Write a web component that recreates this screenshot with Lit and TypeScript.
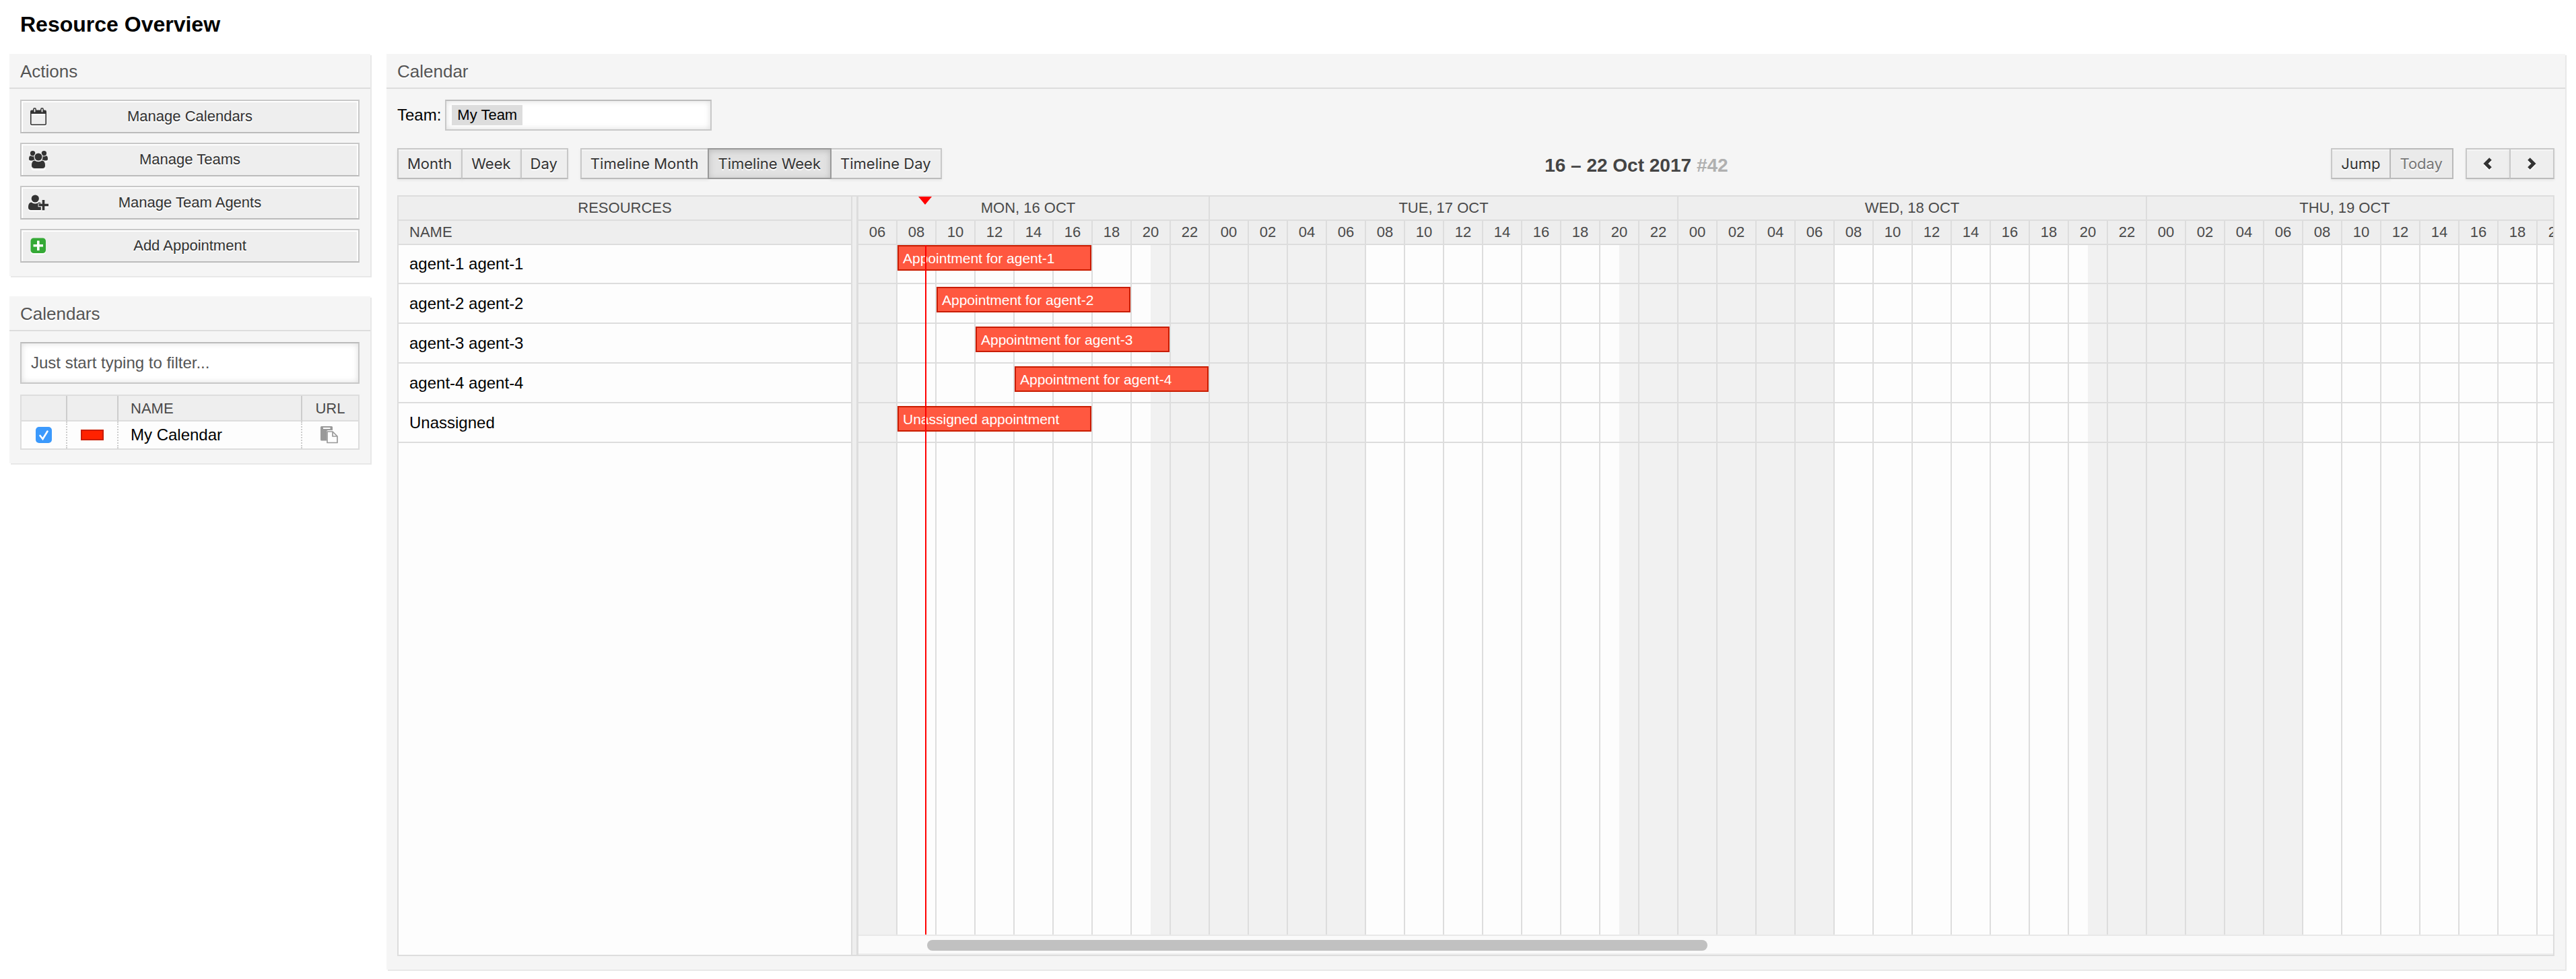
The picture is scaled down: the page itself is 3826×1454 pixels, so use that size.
import { LitElement, html, css, svg } from "lit";
import { customElement } from "lit/decorators.js";
import { classMap } from "lit/directives/class-map.js";
import { styleMap } from "lit/directives/style-map.js";

const calendarIcon = svg`<svg class="icon" viewBox="0 0 24 26" width="24" height="26" aria-hidden="true">
  <rect x="0.800" y="4.300" width="22.400" height="20.900" rx="1.500" fill="none" stroke="#333" stroke-width="1.600"/>
  <path fill="#333" d="M1 4h22v5H1z"/>
  <g fill="#eee" stroke="#333" stroke-width="1.500"><rect x="4.800" y="0.800" width="3.400" height="6.400" rx="1.700"/><rect x="15.800" y="0.800" width="3.400" height="6.400" rx="1.700"/></g></svg>`;
const teamIcon = svg`<svg class="icon" viewBox="0 0 28 28" width="28" height="28" aria-hidden="true">
  <g fill="#333"><circle cx="5.600" cy="4.700" r="3.700"/><circle cx="22.400" cy="4.700" r="3.700"/>
  <path d="M2.200 8.300c2 1.500 5 1.500 7 0v7.200H2.500Q0 15.500 0 13c0-2.500.6-4.700 2.200-4.700zM25.800 8.300c-2 1.500-5 1.500-7 0v7.200h6.700q2.500 0 2.500-2.500c0-2.500-.6-4.700-2.200-4.700z"/></g>
  <g fill="#333" stroke="#eee" stroke-width="1.200">
  <path d="M8.500 14.800c3.300 2.200 7.700 2.200 11 0 3.700.3 5.100 4 5.100 7.900 0 3-1.700 4.900-4.600 4.900H8c-2.900 0-4.600-1.900-4.600-4.900 0-3.900 1.400-7.600 5.100-7.900z"/>
  <circle cx="14" cy="10" r="6.100"/></g></svg>`;
const userPlusIcon = svg`<svg class="icon" viewBox="0 0 30 24" width="30" height="24" aria-hidden="true">
  <g fill="#333"><circle cx="10.300" cy="6" r="5.600"/>
  <path d="M4.700 11.500c3.200 2.600 7.900 2.600 11.100 0 1.600.1 2.600.7 3.400 1.700H14.600v5h4.200v4.500c-.5.200-1 .3-1.600.3H4c-2.500 0-4-1.300-4-3.800 0-4 1-7.400 4.700-7.700z"/>
  <path d="M20.700 8h3.600v5.700H30v3.600h-5.700v6h-3.600v-6h-5.200v-3.600h5.200z"/></g></svg>`;
const plusIcon = svg`<svg class="icon" viewBox="0 0 24 24" width="24" height="24" aria-hidden="true">
  <rect x="0.500" y="0.500" width="22.500" height="22.500" rx="4.500" fill="#35a936"/>
  <path fill="#fff" d="M10 4.500h3.600v5.400H19v3.700h-5.400V19H10v-5.400H4.500V9.900H10z"/></svg>`;
const pasteIcon = svg`<svg viewBox="0 0 26 26" width="26" height="26" aria-hidden="true">
  <path fill="#999" fill-rule="evenodd" d="M1.500 0H16.500q1.500 0 1.500 1.500V6h-6.500Q9 6 9 8.500V21.500H1.500Q0 21.500 0 20V1.500Q0 0 1.500 0zM4 2v2h10.500V2z"/>
  <path fill="#fdfdfd" stroke="#999" stroke-width="1.700" stroke-linejoin="round" d="M10 8h8l7 7v9.500H10z"/>
  <path fill="none" stroke="#999" stroke-width="1.700" stroke-linejoin="round" d="M18 8v7h7"/></svg>`;
const chevron = (d: string) => svg`<svg viewBox="0 0 16 20" width="16" height="20" aria-hidden="true">
  <path fill="none" stroke="#333" stroke-width="5" d=${d}/></svg>`;

interface Row { name: string; title: string; start: number; }

const FIRST_HOUR = 6;
const SLOT = 58;
const ROWS: Row[] = [
  { name: "agent-1 agent-1", title: "Appointment for agent-1", start: 8 },
  { name: "agent-2 agent-2", title: "Appointment for agent-2", start: 10 },
  { name: "agent-3 agent-3", title: "Appointment for agent-3", start: 12 },
  { name: "agent-4 agent-4", title: "Appointment for agent-4", start: 14 },
  { name: "Unassigned", title: "Unassigned appointment", start: 8 },
];
const DAYS = ["MON, 16 OCT", "TUE, 17 OCT", "WED, 18 OCT", "THU, 19 OCT"];
const HOURS = Array.from({ length: 44 }, (_, i) => (FIRST_HOUR + i * 2) % 24);
const pad = (n: number) => String(n).padStart(2, "0");

@customElement("resource-timeline")
export class ResourceTimeline extends LitElement {
  static styles = css`
    :host { display: flex; flex: 1; min-height: 0; border: 2px solid #ddd; background: #fdfdfd; color: #000; }
    .resources { flex: none; width: 672px; border-right: 2px solid #ddd; }
    .splitter { flex: none; width: 6px; background: #eee; border-right: 3px solid #ddd; }
    .timeline { flex: 1; min-width: 0; display: flex; flex-direction: column; overflow: hidden; position: relative; }
    .head { flex: none; display: flex; align-items: center; box-sizing: border-box; height: 36px; border-bottom: 2px solid #ddd;
      background: #eee; color: #4a4a4a; font-size: 22px; line-height: 26px; }
    .resources .head { padding: 0 16px; }
    .center { justify-content: center; }
    .name { display: flex; align-items: center; box-sizing: border-box; height: 59px; padding: 0 16px; border-bottom: 2px solid #ddd;
      font-size: 24px; line-height: 28px; }
    .name.first { height: 58px; }
    .day { flex: none; display: flex; justify-content: center; box-sizing: border-box; width: 696px; height: 34px; align-items: center;
      border-right: 2px solid #ddd; }
    .day.first { width: 522px; padding-right: 16px; }
    .day.last { flex: 1; width: auto; border: 0; padding-right: 16px; }
    .hour { flex: none; box-sizing: border-box; width: 58px; height: 34px; line-height: 34px; border-right: 2px solid #ddd; text-align: center; }
    .body { flex: 1; position: relative; overflow: hidden; }
    .slots { position: absolute; inset: 0; display: flex; }
    .slot { flex: none; box-sizing: border-box; width: 58px; border-right: 2px solid #ddd; }
    .off { background: #f1f1f1; }
    .half { background: linear-gradient(to right, transparent 50%, #f1f1f1 50%); }
    .lane { position: relative; box-sizing: border-box; height: 59px; padding-top: 4px; border-bottom: 2px solid #ddd; }
    .lane.first { height: 58px; padding-top: 0; }
    .event { display: block; box-sizing: border-box; width: 288px; height: 38px; padding: 0 6px; border: 2px solid #c91c00;
      background: #ff5840; color: #fff; font-size: 21px; line-height: 36px; text-decoration: none; white-space: nowrap; overflow: hidden; }
    .now { position: absolute; top: 0; bottom: 0; width: 2px; background: #f00; }
    .marker { position: absolute; top: 0; border: 10px solid transparent; border-top: 12px solid #f00; border-bottom: 0; }
    .scrollbar { flex: none; box-sizing: border-box; height: 30px; padding: 6px 0 0 102px; border-top: 2px solid #e8e8e8;
      border-bottom: 2px solid #ededed; background: #fafafa; }
    .thumb { width: 48%; height: 16px; border-radius: 8px; background: #c1c1c1; }
  `;

  private slotClass(h: number) {
    return classMap({ slot: true, off: h < 8 || h === 22, half: h === 20 });
  }

  render() {
    return html`
      <div class="resources">
        <div class="head center">RESOURCES</div>
        <div class="head">NAME</div>
        ${ROWS.map((r, i) => html`<div class=${classMap({ name: true, first: i === 0 })}>${r.name}</div>`)}
      </div>
      <div class="splitter"></div>
      <div class="timeline">
        <div class="head">
          ${DAYS.map((d, i) => html`<div class=${classMap({ day: true, first: i === 0, last: i === DAYS.length - 1 })}>${d}</div>`)}
        </div>
        <div class="head">${HOURS.map((h) => html`<div class="hour">${pad(h)}</div>`)}</div>
        <div class="marker" style=${styleMap({ left: "89px" })}></div>
        <div class="body">
          <div class="slots">${HOURS.map((h) => html`<div class=${this.slotClass(h)}></div>`)}</div>
          ${ROWS.map((r, i) => html`<div class=${classMap({ lane: true, first: i === 0 })}>
            <a class="event" href="#appointment" style=${styleMap({ marginLeft: `${((r.start - FIRST_HOUR) / 2) * SLOT}px` })}>${r.title}</a>
          </div>`)}
          <div class="now" style=${styleMap({ left: "99px" })}></div>
        </div>
        <div class="scrollbar"><div class="thumb"></div></div>
      </div>`;
  }
}

@customElement("app-root")
export class AppRoot extends LitElement {
  static styles = css`
    :host { display: flex; flex-direction: column; box-sizing: border-box; min-height: 100vh; padding: 0 16px 14px 14px;
      background: #fff; color: #000; font-family: "Liberation Sans", Arial, Helvetica, sans-serif; font-size: 24px; }
    h1 { margin: 0; padding: 18px 16px 26px; font-size: 32px; line-height: 36px; font-weight: bold; }
    .columns { flex: 1; display: flex; gap: 24px; }
    aside { flex: none; width: 536px; display: flex; flex-direction: column; gap: 30px; }
    .box { background: #f5f5f5; box-shadow: 2px 2px 0 #e8e8e8; }
    .box h2 { margin: 0; padding: 11px 16px 9px; border-bottom: 2px solid #ddd; color: #555; font-size: 26px; line-height: 30px;
      font-weight: normal; text-shadow: 0 2px 0 #fff; }
    .content { padding: 16px; }
    main.box { flex: 1; min-width: 0; display: flex; flex-direction: column; }
    main .content { flex: 1; display: flex; flex-direction: column; padding-bottom: 20px; }
    button { margin: 0; box-sizing: border-box; border: 2px solid #c8c8c8; border-bottom-color: #bbb; background: #eee; color: #333;
      font-family: inherit; font-size: 22px; text-shadow: 0 2px 0 #fff; }
    .actions { display: flex; flex-direction: column; gap: 14px; padding-bottom: 20px; }
    .action { display: grid; grid-template-columns: 38px 1fr 38px; align-items: center; height: 50px; padding: 0 6px; line-height: 26px;
      box-shadow: inset 2px 2px 0 #fff, inset -2px 0 0 #fff; }
    .action .icon { justify-self: center; filter: drop-shadow(0 2px 0 #fff); }
    .field { box-sizing: border-box; border: 2px solid #c8c8c8; border-top-color: #bbb; background: #fff; box-shadow: inset 0 0 10px #ddd; }
    .filter { display: block; width: 100%; height: 62px; padding: 0 14px; border-radius: 0; outline: 0; color: #555;
      font: 24px "Liberation Sans", Arial, sans-serif; }
    .filter::placeholder { color: #555; opacity: 1; }
    table { width: 100%; margin: 16px 0 4px; border: 2px solid #ddd; border-collapse: separate; border-spacing: 0; table-layout: fixed; background: #fdfdfd; }
    th, td { padding: 0; text-align: center; border-right: 2px solid #ccc; }
    th { height: 34px; padding-top: 2px; background: #eee; border-bottom: 2px solid #ddd; color: #4a4a4a; font-size: 22px; line-height: 26px; font-weight: normal; }
    td { height: 40px; border-right-style: dotted; line-height: 28px; }
    th:last-child, td:last-child { border-right: 0; }
    .c1 { width: 66px; } .c2 { width: 74px; } .c4 { width: 83px; }
    .label { padding-left: 18px; text-align: left; }
    .check { appearance: none; display: block; width: 24px; height: 24px; margin: 0 auto; border-radius: 5px; background: #3b99fc; }
    .check:checked { background: #3b99fc url("data:image/svg+xml,%3Csvg xmlns='http://www.w3.org/2000/svg' viewBox='0 0 24 24'%3E%3Cpath d='M6.500 13l4 5L17.500 6.500' fill='none' stroke='white' stroke-width='2.600' stroke-linecap='round'/%3E%3C/svg%3E"); }
    .swatch { display: block; box-sizing: border-box; width: 34px; height: 16px; margin: 0 auto; border: 2px solid #c91c00; background: #ff2200; }
    .copy { display: flex; justify-content: center; padding-right: 4px; }
    .team { display: flex; align-items: center; gap: 6px; }
    .teams { display: flex; align-items: center; width: 396px; height: 46px; padding: 0 8px; cursor: text; }
    .tag { border: 0; padding: 0 8px; height: 30px; background: #ddd; color: #000; line-height: 30px; text-shadow: none; }
    .toolbar { display: flex; justify-content: space-between; align-items: center; padding: 26px 0 24px; }
    .groups { display: flex; gap: 18px; }
    .group { display: flex; }
    .tb { height: 46px; padding: 0 14px 0 13px; font-family: Inter, Roboto, sans-serif; line-height: 42px;
      box-shadow: inset 0 2px 0 #f5f5f5, 0 2px 4px rgba(0, 0, 0, 0.06); }
    .tb + .tb { margin-left: -2px; }
    .active { position: relative; border-color: #999; background: #e2e2e2; box-shadow: inset 0 2px 10px #bbb; }
    .tb:disabled { border-color: #bababa; background: #eaeaea; color: #777; box-shadow: none; }
    .nav { width: 67px; display: flex; align-items: center; justify-content: center; }
    .nav svg { filter: drop-shadow(0 2px 0 #fff); }
    .title { margin: 0; padding-top: 5px; color: #444; font-size: 28px; line-height: 32px; font-weight: bold; }
    .week { color: #b0b0b0; }
  `;

  render() {
    const actions: [unknown, string][] = [
      [calendarIcon, "Manage Calendars"], [teamIcon, "Manage Teams"],
      [userPlusIcon, "Manage Team Agents"], [plusIcon, "Add Appointment"],
    ];
    return html`
      <h1>Resource Overview</h1>
      <div class="columns">
        <aside>
          <section class="box">
            <h2>Actions</h2>
            <div class="content actions">
              ${actions.map(([icon, text]) => html`<button class="action">${icon}<span>${text}</span></button>`)}
            </div>
          </section>
          <section class="box">
            <h2>Calendars</h2>
            <div class="content">
              <input class="field filter" type="text" aria-label="Filter calendars" placeholder="Just start typing to filter...">
              <table>
                <thead><tr><th class="c1"></th><th class="c2"></th><th class="label">NAME</th><th class="c4">URL</th></tr></thead>
                <tbody><tr>
                  <td><input class="check" type="checkbox" id="my-calendar" checked></td>
                  <td><span class="swatch"></span></td>
                  <td class="label"><label for="my-calendar">My Calendar</label></td>
                  <td><a class="copy" href="#url" aria-label="Copy URL">${pasteIcon}</a></td>
                </tr></tbody>
              </table>
            </div>
          </section>
        </aside>
        <main class="box">
          <h2>Calendar</h2>
          <div class="content">
            <div class="team">
              <span id="team-label">Team:</span>
              <div class="field teams" role="group" aria-labelledby="team-label"><button class="tag">My Team</button></div>
            </div>
            <div class="toolbar">
              <div class="groups">
                <div class="group"><button class="tb">Month</button><button class="tb">Week</button><button class="tb">Day</button></div>
                <div class="group"><button class="tb">Timeline Month</button><button class="tb active">Timeline Week</button><button class="tb">Timeline Day</button></div>
              </div>
              <h3 class="title">16 – 22 Oct 2017 <span class="week">#42</span></h3>
              <div class="groups">
                <div class="group"><button class="tb">Jump</button><button class="tb" disabled>Today</button></div>
                <div class="group">
                  <button class="tb nav" aria-label="Previous">${chevron("M12 3L5 10L12 17")}</button>
                  <button class="tb nav" aria-label="Next">${chevron("M4 3L11 10L4 17")}</button>
                </div>
              </div>
            </div>
            <resource-timeline></resource-timeline>
          </div>
        </main>
      </div>`;
  }
}
